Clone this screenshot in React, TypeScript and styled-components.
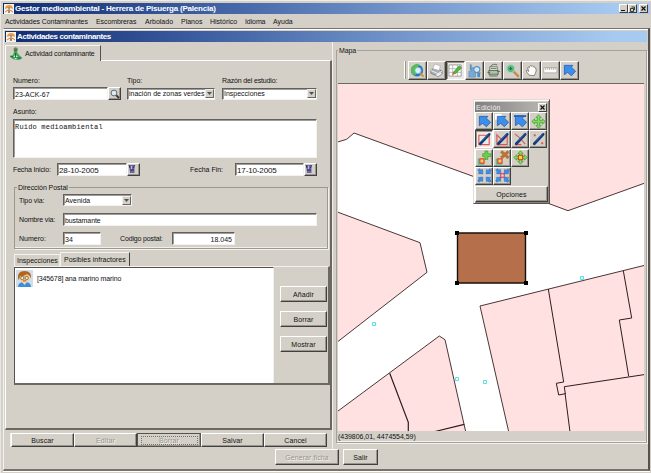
import React from 'react';
import styled, { createGlobalStyle, css } from 'styled-components';

const face = '#d4d0c8';

const GlobalStyle = createGlobalStyle`
  * { box-sizing: border-box; }
  body {
    margin: 0;
    background: ${face};
    font-family: "Liberation Sans", Arial, sans-serif;
    font-size: 7px;
    line-height: 9px;
    color: #111;
    overflow: hidden;
  }
`;

const raised = css`
  border: 1px solid;
  border-color: #fff #404040 #404040 #fff;
  box-shadow: inset -1px -1px 0 #9a968e;
`;
const sunken = css`
  border: 1px solid;
  border-color: #606060 #f4f2ee #f4f2ee #606060;
  box-shadow: inset 1px 1px 0 #a09c96;
`;

const Screen = styled.div`
  width: 651px;
  height: 473px;
  padding: 2px 1px 0 2px;
  background: ${face};
  border-top: 1px solid #efede8;
  border-left: 1px solid #e8e6e0;
  display: flex;
  flex-direction: column;
`;
const TitleBar = styled.header<{ $h: number }>`
  height: ${p => p.$h}px;
  flex: none;
  display: flex;
  align-items: center;
  gap: 1px;
  padding: 0 2px 0 1px;
  background: linear-gradient(90deg, #0f2c72 0%, #3f60a2 32%, #7496cc 62%, #a6caf0 95%);
  color: #fff;
`;
const Caption = styled.span<{ $ls: number }>`
  font-weight: bold;
  font-size: 8px;
  letter-spacing: ${p => p.$ls}px;
  white-space: nowrap;
`;
const WinButtons = styled.div`
  margin-left: auto;
  display: flex;
`;
const WinButton = styled.span<{ $gap?: number }>`
  ${raised}
  box-shadow: none;
  width: 9px;
  height: 9px;
  margin-left: ${p => p.$gap ?? 0}px;
  background: ${face};
  display: grid;
  place-items: center;
  svg { display: block; }
`;
const MenuBar = styled.nav`
  height: 14px;
  flex: none;
  display: flex;
  align-items: center;
  padding: 1px 0 0 2px;
`;
const MenuItem = styled.span<{ $w: number; $ls?: number }>`
  width: ${p => p.$w}px;
  letter-spacing: ${p => p.$ls ?? 0}px;
  white-space: nowrap;
`;
const InnerWindow = styled.section`
  height: 443px;
  flex: none;
  border: 1px solid #77736c;
  border-right: 2px solid #55524d;
  border-bottom: 2px solid #77736c;
  border-left-color: #f4f3f0;
  box-shadow: inset 0 1px 0 #fff, 0 1px 0 #fff;
  padding: 2px 1px 0 1px;
  display: flex;
  flex-direction: column;
`;
const Body = styled.div`
  display: flex;
  height: 407px;
`;
const LeftColumn = styled.div`
  width: 328px;
  flex: none;
  padding-top: 3px;
  border-right: 1px solid #f2f0ec;
`;
const MainTab = styled.div`
  width: 96px;
  height: 16px;
  margin: 0 0 -1px 0;
  position: relative;
  border: solid;
  border-width: 1px 1px 0 1px;
  border-color: #f6f5f2 #55524d ${face} #fff;
  background: ${face};
  display: flex;
  align-items: center;
  padding-left: 3px;
  gap: 2px;
`;
const TabPage = styled.div`
  width: 327px;
  height: 370px;
  border: 1px solid;
  border-width: 1px 2px 2px 1px;
  border-color: #fff #6b6862 #6b6862 #fff;
  padding: 14px 0 0 7px;
`;
const Row = styled.div<{ $h: number; $mt?: number }>`
  height: ${p => p.$h}px;
  margin-top: ${p => p.$mt ?? 0}px;
  display: flex;
  align-items: center;
`;
const Label = styled.span<{ $w: number; $ls?: number; $ml?: number }>`
  width: ${p => p.$w}px;
  margin-left: ${p => p.$ml ?? 0}px;
  flex: none;
  letter-spacing: ${p => p.$ls ?? 0}px;
  white-space: nowrap;
`;
const Field = styled.div<{ $w: number; $right?: boolean; $ls?: number; $fs?: number }>`
  ${sunken}
  width: ${p => p.$w}px;
  height: 13px;
  flex: none;
  background: #fff;
  padding: 2px 2px 0 1px;
  font-size: ${p => p.$fs ?? 7}px;
  letter-spacing: ${p => p.$ls ?? 0}px;
  text-align: ${p => (p.$right ? 'right' : 'left')};
  white-space: nowrap;
  overflow: hidden;
`;
const Combo = styled.div<{ $w: number; $ml?: number; $ls?: number }>`
  ${sunken}
  width: ${p => p.$w}px;
  height: 12px;
  margin-left: ${p => p.$ml ?? 0}px;
  padding-left: 1px;
  flex: none;
  background: #fff;
  display: flex;
  align-items: center;
  justify-content: space-between;
  letter-spacing: ${p => p.$ls ?? 0}px;
  white-space: nowrap;
`;
const ComboArrow = styled.span`
  ${raised}
  box-shadow: none;
  border-color: #eee #666 #666 #eee;
  width: 9px;
  height: 9px;
  background: ${face};
  display: grid;
  place-items: center;
`;
const SquareButton = styled.button`
  ${raised}
  width: 13px;
  height: 13px;
  flex: none;
  padding: 0;
  background: ${face};
  display: grid;
  place-items: center;
`;
const Memo = styled.div`
  ${sunken}
  width: 304px;
  height: 39px;
  background: #fff;
  padding: 2px 0 0 1px;
  font-family: "Liberation Mono", monospace;
  font-size: 7px;
  letter-spacing: 0.19px;
  line-height: 10px;
`;
const Group = styled.fieldset`
  width: 314px;
  height: 66px;
  margin: 7px 0 0 1px;
  padding: 0 0 0 4px;
  border: 1px solid #9c9890;
  box-shadow: inset 0 -1px 0 #f0eeea, 1px 1px 0 #f4f2ee;
  min-width: 0;
`;
const Legend = styled.legend`
  padding: 0 1px;
  margin-left: -2px;
  height: 9px;
  letter-spacing: -0.05px;
`;
const SubTabs = styled.div`
  display: flex;
  align-items: flex-end;
  height: 14px;
  margin: 3px 0 0 1px;
`;
const SubTab = styled.div<{ $active?: boolean; $w: number }>`
  width: ${p => p.$w}px;
  height: ${p => (p.$active ? 14 : 12)}px;
  padding: ${p => (p.$active ? '2px 0 0 3px' : '1px 0 0 2px')};
  border: solid;
  border-width: 1px 1px 0 1px;
  border-color: #f4f2ee ${p => (p.$active ? '#44413d' : '#e8e6e0')} transparent #f4f2ee;
  white-space: nowrap;
  letter-spacing: ${p => (p.$active ? 0.03 : 0)}px;
`;
const SubPage = styled.div`
  width: 316px;
  height: 119px;
  margin-left: 1px;
  border: solid;
  border-width: 1px 2px 2px 0;
  border-color: #f4f2ee #6b6862 #6b6862;
  display: flex;
`;
const List = styled.div`
  width: 260px;
  height: 116px;
  background: #fff;
  border: solid #55524d;
  border-width: 1px 0 0 1px;
  border-right: 1px solid #f2f0ec;
`;
const ListItem = styled.div`
  display: flex;
  align-items: center;
  gap: 4px;
  height: 20px;
  padding-left: 1px;
  letter-spacing: -0.13px;
`;
const SideButtons = styled.div`
  padding: 19px 0 0 6px;
  display: flex;
  flex-direction: column;
  gap: 9px;
`;
const Button = styled.button<{ $w: number; $h: number; $off?: boolean; $mt?: number }>`
  ${raised}
  width: ${p => p.$w}px;
  height: ${p => p.$h}px;
  margin-top: ${p => p.$mt ?? 0}px;
  flex: none;
  padding: 0;
  background: ${face};
  font: inherit;
  letter-spacing: 0.1px;
  color: ${p => (p.$off ? '#99958e' : '#111')};
  text-shadow: ${p => (p.$off ? '1px 1px 0 #f4f2ee' : 'none')};
`;
const FocusedButton = styled(Button)`
  border-color: #55524d;
  display: grid;
  place-items: center;
`;
const FocusRing = styled.span`
  border: 1px dotted #77736c;
  width: 57px;
  height: 9px;
  line-height: 8px;
`;
const ActionBar = styled.div`
  display: flex;
  margin: 3px 0 0 5px;
  border-left: 1px solid #f4f2ee;
`;
const Footer = styled.footer`
  display: flex;
  padding: 0 0 0 270px;
  gap: 4px;
`;
const MapGroup = styled.fieldset`
  width: 311px;
  height: 397px;
  margin: 4px 0 0 3px;
  padding: 0;
  min-width: 0;
  border: 1px solid #a5a19a;
  box-shadow: inset 0 -1px 0 #f4f2ee, 1px 1px 0 #f4f2ee;
`;
const MapLegend = styled.legend`
  padding: 0 1px;
  margin-left: 1px;
  height: 8px;
  letter-spacing: -0.1px;
`;
const ToolBar = styled.div`
  height: 29px;
  display: flex;
  align-items: flex-start;
  padding: 7px 0 0 67px;
`;
const Separator = styled.i`
  width: 2px;
  height: 18px;
  margin-right: 2px;
  border-left: 1px solid #fff;
  border-right: 1px solid #9a968e;
`;
const Tool = styled.button<{ $on?: boolean; $w: number; $h: number }>`
  ${raised}
  width: ${p => p.$w}px;
  height: ${p => p.$h}px;
  padding: 0;
  background: ${face};
  display: grid;
  place-items: center;
  ${p => p.$on && css`
    background: #eceae6;
    border-color: #44413d #fff #fff #44413d;
    box-shadow: inset 1px 1px 0 #9a968e;
  `}
`;
const MapView = styled.div`
  position: relative;
  width: 306px;
  height: 348px;
  margin-left: 1px;
  border-top: 1px solid #6b6862;
  background: #fff;
  > svg { display: block; }
`;
const Coordinates = styled.div`
  height: 10px;
  padding: 1px 0 0 1px;
  letter-spacing: -0.04px;
`;
const Palette = styled.div`
  position: absolute;
  left: 135px;
  top: 15px;
  width: 77px;
  height: 105px;
  background: ${face};
  border: 1px solid;
  border-color: #e0ddd6 #55524d #55524d #e0ddd6;
  box-shadow: inset 1px 1px 0 #fff, inset -1px -1px 0 #8a867f;
  padding: 2px 1px 0 1px;
`;
const PaletteTitle = styled.div`
  height: 10px;
  display: flex;
  align-items: center;
  justify-content: space-between;
  padding: 0 1px;
  color: #f1efea;
  letter-spacing: 0.25px;
  background: linear-gradient(90deg, #808080, #bcb9b4);
`;
const PaletteGrid = styled.div`
  display: grid;
  grid-template-columns: repeat(4, 18px);
  grid-auto-rows: 18.3px;
`;

const Glyph = ({ children }: { children: React.ReactNode }) => (
  <svg width="15" height="15" viewBox="0 0 16 16" fill="none">{children}</svg>
);

const SunIcon = () => (
  <svg width="10" height="10" viewBox="0 0 10 10">
    <rect width="10" height="10" fill="#f4f3ee" />
    <path d="M1 5a4 4 0 0 1 8 0L6 4 5 6 4 4z" fill="#ef9a3a" />
    <path d="M1 8l3-2 1 3M9 8L6 6 5 9" stroke="#e07a28" strokeWidth="1" fill="none" />
    <path d="M5 3v6" stroke="#5c87b8" />
  </svg>
);
const ActivityIcon = () => (
  <svg width="14" height="14" viewBox="0 0 14 14">
    <path d="M5 5h3l2 3 3.500 3q-2 2-4.500 2-5 0-8.500-3.500L4 8z" fill="#3fa95b" />
    <path d="M4.500 1.500q2.500-2.500 4.500.5L8 5H5z" fill="#3ea457" />
    <circle cx="6.500" cy="3.300" r="1.500" fill="#8c5f3c" />
    <path d="M4 10q2.500-3.500 5 0l-2 2.500z" fill="#e9f4ea" />
    <path d="M1.500 9l4 1.500 6 .5M6.500 6v4" stroke="#0d6431" strokeWidth=".9" fill="none" />
  </svg>
);
const Chevron = () => (
  <svg width="5" height="3" viewBox="0 0 5 3"><path d="M0 0h5L2.500 3z" fill="#55524d" /></svg>
);
const SearchIcon = () => (
  <svg width="10" height="10" viewBox="0 0 10 10">
    <path d="M6 6l3 3" stroke="#3c3834" strokeWidth="1.8" />
    <circle cx="4" cy="4" r="2.900" fill="#dcebf0" stroke="#5d6a70" />
  </svg>
);
const CalendarIcon = () => (
  <svg width="11" height="11" viewBox="0 0 11 11">
    <path d="M1 1h5.500v8H2z" fill="#6c67a4" />
    <path d="M1 1l1 3M6.500 1l-1 3M2 6h4" stroke="#33305f" />
    <path d="M3.500 2v3" stroke="#bdb9df" />
  </svg>
);
const PersonIcon = () => (
  <svg width="17" height="17" viewBox="0 0 17 17">
    <rect width="17" height="17" fill="#d3dde6" />
    <path d="M2 17q0-5 6.500-5t6.500 5z" fill="#3a8fdc" />
    <path d="M6 12h5l-2.500 3z" fill="#f8d6b4" />
    <circle cx="8.500" cy="7.500" r="4.700" fill="#f3c272" />
    <path d="M2 8.500Q1 1 8.500 1T15 8.500q-1-3.500-4-4.500Q6 7 4 6L3 10z" fill="#b4621f" />
    <circle cx="6.300" cy="8" r="1.600" fill="#e8f2fa" stroke="#7a4a2a" strokeWidth=".7" />
    <circle cx="10.700" cy="8" r="1.600" fill="#e8f2fa" stroke="#7a4a2a" strokeWidth=".7" />
    <path d="M7 10.800h3" stroke="#c3522f" strokeWidth=".8" />
  </svg>
);
const CloseGlyph = () => (
  <svg width="5" height="5" viewBox="0 0 5 5"><path d="M.5.5l4 4M4.500.5l-4 4" stroke="#111" strokeWidth="1.200" /></svg>
);

const BlueArrow = () => (
  <path d="M2.500 2.500h9L10 4.500l4.500 4.200-4.500 5-4-3.700-3.500 2.500z" fill="#3d8ee8" stroke="#1e58b4" strokeWidth=".8" strokeLinejoin="round" />
);
const Pen = () => (
  <>
    <path d="M3.500 12.500L13 2.500" stroke="#123a7c" strokeWidth="2.900" strokeLinecap="round" />
    <path d="M5.500 9.700l6.500-7" stroke="#3c7cc4" strokeWidth=".6" />
  </>
);
const FourWay = () => (
  <path
    d="M8 .8l2.800 3H9.200v3h3V5.200L15.200 8l-3 2.800V9.200h-3v3h1.600L8 15.200l-2.800-3h1.600v-3h-3v1.600L.8 8l3-2.800v1.600h3v-3H5.200z"
    fill="#86dc62" stroke="#3ca12d" strokeWidth=".8"
  />
);
const Corners = () => (
  <>
    {[0, 90, 180, 270].map(a => (
      <path key={a} transform={`rotate(${a} 8 8)`} d="M.8 2l2-1.200 1.400 1.200 1.800-.5.300 4.800-4.800-.3.800-1.700z" fill="#3d8ee8" stroke="#2763b8" strokeWidth=".5" />
    ))}
  </>
);

const mapTools: React.ReactNode[] = [
  <>
    <circle cx="7.500" cy="8" r="6.500" fill="#2578c9" />
    <path d="M2 4q5-5 8-2l-3 4-1 7q-6-1-5-7z" fill="#58bd54" />
    <circle cx="8.500" cy="8" r="3.300" fill="#d9effa" stroke="#86b6cf" />
    <path d="M11 11l3.500 3.500" stroke="#d98c2a" strokeWidth="2" />
  </>,
  <>
    <path d="M2 8l4-3 8 3.500v3l-4 3-8-3.500z" fill="#a9adb5" stroke="#63666e" strokeWidth=".7" />
    <path d="M4 6l2-5 6 2-1 5z" fill="#fff" stroke="#9a9da2" strokeWidth=".6" />
    <path d="M2 8l8 3.500 4-3" stroke="#f2f3f5" />
    <path d="M7 13l4-3 3 1-4 3z" fill="#e7edf4" />
  </>,
  <>
    <path d="M1 2h13v12H1z" fill="#fff" stroke="#868686" strokeWidth=".8" />
    <path d="M1 6h13M1 10h13M5 2v12M10 2v12" stroke="#9d9d9d" strokeWidth=".7" />
    <path d="M5.500 10l6.500-7 2.500 2L8 11.500z" fill="#52b83b" stroke="#287d20" strokeWidth=".6" />
    <path d="M5.500 10L8 11.500 4 13z" fill="#e4523e" />
  </>,
  <>
    <path d="M2 15V9h3V5h4v10z" fill="#72addf" stroke="#4780b5" strokeWidth=".6" />
    <path d="M3 1.500h2V8H3z" fill="#5a93cb" />
    <circle cx="10.500" cy="7" r="3.200" fill="#d4e8f7" stroke="#4f92cf" strokeWidth="1.200" />
    <path d="M11 10h3v5h-3z" fill="#4b8ecb" />
    <path d="M6 11h3M13 9l1.500 2" stroke="#c98b56" />
  </>,
  <>
    <path d="M4 4h8v10H4z" fill="#ece9df" stroke="#5d6158" strokeWidth=".8" />
    <path d="M3 8h10v4H3z" fill="#b3c0af" stroke="#465346" strokeWidth=".8" />
    <path d="M5 4q2-4 7-2M5 6h6M1.500 10h3M12 9h3" stroke="#4a6750" strokeWidth=".9" />
    <path d="M5 13h6" stroke="#4fa35c" />
  </>,
  <>
    <path d="M9 9l5 5" stroke="#c88a4a" strokeWidth="2.600" strokeLinecap="round" />
    <circle cx="6" cy="6" r="4.200" fill="#4fbd76" stroke="#b5cdc6" strokeWidth="1.400" />
    <path d="M6 4.500v3M4.500 6h3" stroke="#16643a" strokeWidth="1" />
  </>,
  <path
    d="M5.500 13Q2 9 2.500 8q1-1 2.500 1L3.800 5q.8-1.400 1.800.2L6 3.500q1-1.400 1.800 0Q9 2 9.800 4q1.500-1 1.700 1l1.300.8q.8 3-.8 5.200l-1 2.500z"
    fill="#fdfdfd" stroke="#77736c" strokeWidth=".9"
  />,
  <>
    <path d="M.8 5h14v5.500H.8z" fill="#fff" stroke="#a6a29a" strokeWidth=".8" />
    <path d="M3 5v2.500M5 5v2M7 5v2.500M9 5v2M11 5v2.500M13 5v2" stroke="#8c8880" strokeWidth=".7" />
  </>,
  <BlueArrow />,
];

const editTools: React.ReactNode[] = [
  <BlueArrow />,
  <><path d="M0 0h7v6H0z" fill="#fff" /><BlueArrow /></>,
  <><path d="M1 2.200h13" stroke="#2763b8" strokeWidth="2" /><BlueArrow /></>,
  <FourWay />,
  <><path d="M2 3.500h11v10H2z" stroke="#e05252" strokeWidth="1.200" /><Pen /></>,
  <><path d="M2 3v10.500h11V4L8 9z" stroke="#e05252" strokeWidth="1.200" /><Pen /></>,
  <><path d="M2 2q6 4 11 11M2 13.500h7" stroke="#e05252" strokeWidth="1.200" /><Pen /></>,
  <><path d="M3 3.500h2M11 12h2M3 12.500h1" stroke="#e05252" strokeWidth="2" /><Pen /></>,
  <>
    <path d="M1.500 9v6h6" stroke="#3fc7b0" strokeWidth="1.500" />
    <path d="M3 9.500h4.500V14H3z" fill="#ffcf6a" stroke="#e0451f" strokeWidth="1.300" />
    <path d="M8.500 1h3v3H15v3h-3.500v3h-3V7H6V4h2.500z" fill="#6ed04a" stroke="#3c9d2c" strokeWidth=".7" />
  </>,
  <>
    <path d="M1.500 9v6h6" stroke="#3fc7b0" strokeWidth="1.500" />
    <path d="M3 9.500h4.500V14H3z" fill="#ffcf6a" stroke="#e0451f" strokeWidth="1.300" />
    <path d="M6.500 1.500l8 7M14.500 1.500l-8 7" stroke="#b9743a" strokeWidth="3.400" />
  </>,
  <><FourWay /><path d="M5.700 5.700h4.600v4.600H5.700z" fill="#ffcf3a" stroke="#c9401e" strokeWidth="1.100" /></>,
  null,
  <Corners />,
  <><Corners /><path d="M6.200 6.200h3.600v3.600H6.200z" fill="#f7d9d9" stroke="#d6304a" strokeWidth="1.100" /></>,
];

const CadastralMap = () => (
  <svg width="306" height="347" viewBox="338 84 306 347" fill="none" stroke="#4a3636" strokeWidth="1">
    <path d="M336 83V142.500L346.700 139.300 354 133 473 176.300 550 204 568 210.700 645 183V83z" fill="#ffe1e1" stroke="none" />
    <path d="M336 142.500L346.700 139.300 354 133 473 176.300 550 204 568 210.700 645 183" />
    <g fill="#ffe1e1">
      <path d="M336 211.500L420 242.700 427 272.300 336 343z" />
      <path d="M336 412.500L439.300 336 445 339.700 466 433H336z" />
      <path d="M480 306L646 265V433H509z" />
    </g>
    <path d="M389.700 373.300L408.300 422.300V432M435 431.500L464.300 424.300" stroke="#2e1d1d" strokeWidth="1.200" />
    <path d="M548.300 289L563.700 382 556.300 383.300 558.700 395 565.300 393.700 564.300 386.700 645 374.500M565 393L570 432" stroke="#2e1d1d" />
    <path d="M623.300 270.700L631.700 318 619.300 320 628.700 376.300" stroke="#2e1d1d" />
    <path
      d="M580.500 276.500h3v3h-3zM372.500 322.500h3v3h-3zM455.500 377.500h3v3h-3zM483.500 380.500h3v3h-3z"
      stroke="#45e0e6" strokeWidth=".9"
    />
    <path d="M457.500 233h68v50h-68z" fill="#b56f4b" stroke="#17100c" strokeWidth="1.400" />
    <path d="M455 231h4v4h-4zM524 231h4v4h-4zM455 281h4v4h-4zM524 281h4v4h-4z" fill="#000" stroke="none" />
  </svg>
);

export default function App() {
  return (
    <>
      <GlobalStyle />
      <Screen>
        <TitleBar $h={11}>
          <SunIcon />
          <Caption $ls={-0.21}>Gestor medioambiental - Herrera de Pisuerga (Palencia)</Caption>
          <WinButtons>
            <WinButton><svg width="5" height="5"><path d="M0 4.500h4" stroke="#111" /></svg></WinButton>
            <WinButton><svg width="5" height="6"><path d="M1.500 1h3v3M.5 2.500h3v3h-3z" stroke="#111" fill="none" strokeWidth=".8" /></svg></WinButton>
            <WinButton $gap={2}><CloseGlyph /></WinButton>
          </WinButtons>
        </TitleBar>
        <MenuBar>
          <MenuItem $w={91} $ls={-0.08}>Actividades Contaminantes</MenuItem>
          <MenuItem $w={49} $ls={-0.08}>Escombreras</MenuItem>
          <MenuItem $w={36}>Arbolado</MenuItem>
          <MenuItem $w={29}>Planos</MenuItem>
          <MenuItem $w={35}>Histórico</MenuItem>
          <MenuItem $w={28} $ls={-0.1}>Idioma</MenuItem>
          <MenuItem $w={30}>Ayuda</MenuItem>
        </MenuBar>
        <InnerWindow>
          <TitleBar $h={11}>
            <SunIcon />
            <Caption $ls={-0.39}>Actividades contaminantes</Caption>
          </TitleBar>
          <Body>
            <LeftColumn>
              <MainTab>
                <ActivityIcon />
                <Label $w={72} $ls={-0.13}>Actividad contaminante</Label>
              </MainTab>
              <TabPage>
                <Row $h={10}>
                  <Label $w={114}>Numero:</Label>
                  <Label $w={95}>Tipo:</Label>
                  <Label $w={70} $ls={-0.15}>Razón del estudio:</Label>
                </Row>
                <Row $h={13} $mt={2}>
                  <Field $w={95}>23-ACK-67</Field>
                  <SquareButton><SearchIcon /></SquareButton>
                  <Combo $w={88} $ml={6}>inación de zonas verdes<ComboArrow><Chevron /></ComboArrow></Combo>
                  <Combo $w={95} $ml={7}>Inspecciones<ComboArrow><Chevron /></ComboArrow></Combo>
                </Row>
                <Row $h={10} $mt={6}><Label $w={60}>Asunto:</Label></Row>
                <Row $h={39} $mt={3}><Memo>Ruido medioambiental</Memo></Row>
                <Row $h={13} $mt={5}>
                  <Label $w={44} $ls={-0.15}>Fecha Inicio:</Label>
                  <Field $w={70} $fs={8} $ls={-0.13}>28-10-2005</Field>
                  <SquareButton><CalendarIcon /></SquareButton>
                  <Label $w={45} $ml={50}>Fecha Fin:</Label>
                  <Field $w={69} $fs={8} $ls={-0.13}>17-10-2005</Field>
                  <SquareButton><CalendarIcon /></SquareButton>
                </Row>
                <Group>
                  <Legend>Dirección Postal</Legend>
                  <Row $h={12} $mt={2}>
                    <Label $w={44} $ls={-0.1}>Tipo via:</Label>
                    <Combo $w={69}>Avenida<ComboArrow><Chevron /></ComboArrow></Combo>
                  </Row>
                  <Row $h={13} $mt={7}>
                    <Label $w={44} $ls={-0.15}>Nombre via:</Label>
                    <Field $w={254} $ls={-0.1}>bustamante</Field>
                  </Row>
                  <Row $h={13} $mt={6}>
                    <Label $w={44}>Numero:</Label>
                    <Field $w={38}>34</Field>
                    <Label $w={52} $ml={19} $ls={-0.15}>Codigo postal:</Label>
                    <Field $w={63} $right>18.045</Field>
                  </Row>
                </Group>
                <SubTabs>
                  <SubTab $w={46}>Inspecciones</SubTab>
                  <SubTab $active $w={70}>Posibles infractores</SubTab>
                </SubTabs>
                <SubPage>
                  <List>
                    <ListItem><PersonIcon />[345678] ana marino marino</ListItem>
                  </List>
                  <SideButtons>
                    <Button $w={47} $h={16}>Añadir</Button>
                    <Button $w={47} $h={16}>Borrar</Button>
                    <Button $w={47} $h={16}>Mostrar</Button>
                  </SideButtons>
                </SubPage>
              </TabPage>
              <ActionBar>
                <Button $w={63} $h={14}>Buscar</Button>
                <Button $w={63} $h={14} $off>Editar</Button>
                <FocusedButton $w={64} $h={14} $off><FocusRing>Borrar</FocusRing></FocusedButton>
                <Button $w={63} $h={14}>Salvar</Button>
                <Button $w={63} $h={14}>Cancel</Button>
              </ActionBar>
            </LeftColumn>
            <MapGroup>
              <MapLegend>Mapa</MapLegend>
              <ToolBar>
                <Separator />
                {mapTools.map((icon, i) => (
                  <Tool key={i} $w={19} $h={19} $on={i === 2}><Glyph>{icon}</Glyph></Tool>
                ))}
              </ToolBar>
              <MapView>
                <CadastralMap />
                <Palette>
                  <PaletteTitle>Edición<WinButton><CloseGlyph /></WinButton></PaletteTitle>
                  <PaletteGrid>
                    {editTools.map((icon, i) =>
                      icon ? <Tool key={i} $w={18} $h={18} $on={i === 4}><Glyph>{icon}</Glyph></Tool> : <span key={i} />
                    )}
                  </PaletteGrid>
                  <Button $w={73} $h={16} $mt={1}>Opciones</Button>
                </Palette>
              </MapView>
              <Coordinates>(439806,01, 4474554,59)</Coordinates>
            </MapGroup>
          </Body>
          <Footer>
            <Button $w={64} $h={16} $off>Generar ficha</Button>
            <Button $w={35} $h={16}>Salir</Button>
          </Footer>
        </InnerWindow>
      </Screen>
    </>
  );
}
